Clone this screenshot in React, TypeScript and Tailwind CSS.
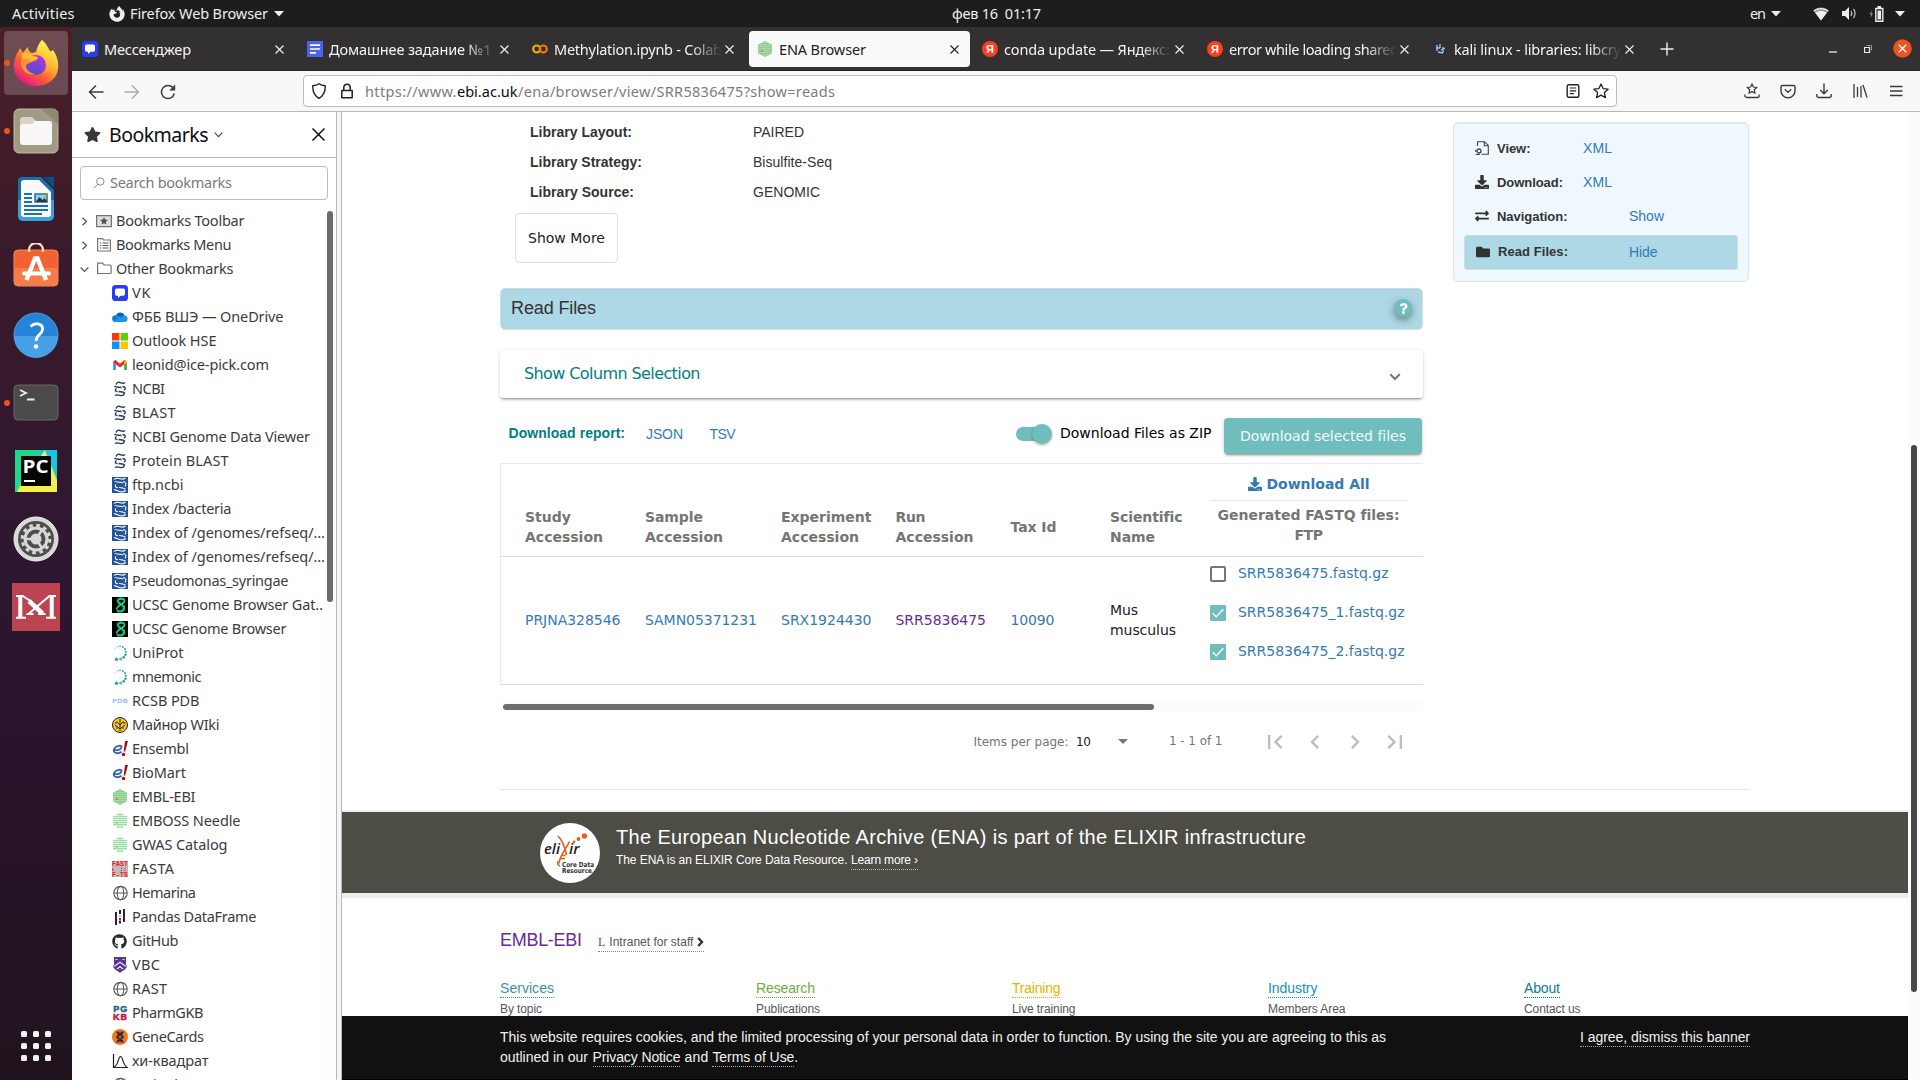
import React, { useLayoutEffect, useRef, useState } from "react";
import { FaFirefoxBrowser, FaDownload, FaExchangeAlt, FaFolder, FaQuestion, FaGithub, FaStar } from "react-icons/fa";
import { MdFirstPage, MdChevronLeft, MdChevronRight, MdLastPage } from "react-icons/md";

/* Text run whose tracking is adjusted so that it takes up w pixels. */
function Fit({ w, className = "", children }: { w: number; className?: string; children: string }) {
  const ref = useRef<HTMLSpanElement>(null);
  const [ls, setLs] = useState(0);
  useLayoutEffect(() => {
    const el = ref.current;
    if (!el) return;
    const natural = el.getBoundingClientRect().width;
    setLs((w - natural) / Math.max(1, children.length - 1));
  }, []);
  return (
    <span ref={ref} className={"inline-block justify-self-start whitespace-pre " + className} style={{ letterSpacing: ls + "px" }}>
      {children}
    </span>
  );
}

const Svg = ({ s = 16, vb = "0 0 16 16", className = "", children }: any) => (
  <svg width={s} height={s} viewBox={vb} className={"shrink-0 " + className} fill="none">
    {children}
  </svg>
);

/* ---------- favicons ---------- */
const Vk = () => (
  <Svg><rect width="16" height="16" rx="3.6" fill="#2a3df5" /><path d="M4.6 3.500h6.800a1.600 1.600 0 0 1 1.600 1.600v4a1.600 1.600 0 0 1-1.600 1.600H8.600L6 12.900v-2.200H4.600A1.600 1.600 0 0 1 3 9.100v-4a1.600 1.600 0 0 1 1.600-1.600z" fill="#fff" /></Svg>
);
const OneDrive = () => (
  <Svg><path d="M4 6.500A4.600 4.600 0 0 1 12.500 6l-3 3.500z" fill="#0364b8" /><path d="M3.500 6.200 12 11.500 8 13H3.500a3.400 3.400 0 0 1 0-6.800z" fill="#0f78d4" /><path d="M12.300 6.300a3.500 3.500 0 0 1 1.200 6.700H3.500C2 13 1 12.200.7 11.500L9 8z" fill="#1b93e8" /></Svg>
);
const Ms = () => (
  <Svg><path d="M0 0h7.500v7.500H0z" fill="#fb3a0a" /><path d="M8.500 0H16v7.500H8.500z" fill="#5fcf0c" /><path d="M0 8.500h7.500V16H0z" fill="#0a95f5" /><path d="M8.500 8.500H16V16H8.500z" fill="#fdc500" /></Svg>
);
const Gmail = () => (
  <Svg><path d="M2.500 13V4.500" stroke="#4285f4" strokeWidth="2.600" /><path d="M13.500 13V4.500" stroke="#34a853" strokeWidth="2.600" /><path d="M2.200 4 8 8.600 13.800 4" stroke="#ea2a25" strokeWidth="3" /><path d="M12.200 3.500h2.600V6l-2.600 1.500z" fill="#fbbc04" /></Svg>
);
const Ncbi = () => (
  <Svg><path d="M4 3.500C5 .8 7 1 9 1.800s2.800.7 4-.3M2.500 5c1.500 1.800 4.500.8 7 1.500M10.500 5.500c3 .3 3.500 2 1.500 3.800M4.500 7.500C2.500 9 3 10.500 5.500 10.700M6.500 10.500c2.500 0 5 .3 6.500 1.800M3 14.500c1.500-1.200 3.500-.5 5.500 0s3.200-.2 3.800-2" stroke="#223b63" strokeWidth="1.400" /></Svg>
);
const NcbiBlue = () => (
  <Svg><path d="M0 0h16v16H0z" fill="#24539a" /><path d="M2 2.500C4 1 6.500 1 8.500 1.800s3.500.2 5-.8M3 4c1.500 1.800 5 .8 8 2M11 4.500c3 .5 3.500 3 2 5M4 7.500C2.500 9.500 4 10.700 6 10.800M7 10.500c2.500 0 4.500.3 6.500 1.800M2 13c2-.8 4.500 2 7 2s3.500-.5 5-1.500" stroke="#fff" strokeWidth="1.150" /></Svg>
);
const Ucsc = () => (
  <Svg><path d="M0 0h16v16H0z" fill="#000" /><path d="M11.500 2C7 .8 4.500 3 6.500 5.500s6 2.500 5.500 6-5 3.500-7 2" stroke="#10c46a" strokeWidth="2.200" /><path d="M8 1.500c5.500 0 5.500 3 2.500 5s-6.500 3.500-5.500 6" stroke="#1fc79a" strokeWidth="1.700" /></Svg>
);
const Uniprot = () => (
  <Svg>{[[8, 1.200, 0.9], [10.800, 2, 1], [12.900, 4, 1.100], [13.800, 6.700, 1.200], [13.500, 9.700, 1.300], [11.700, 12.300, 1.400], [8.700, 14, 1.500], [4.500, 14.200, 1.700], [5.200, 1.800, 0.6], [3, 3.200, 0.5]].map(([x, y, r], i) => <circle key={i} cx={x} cy={y} r={r} fill={i % 3 ? "#3e9fae" : "#4cb8c4"} />)}</Svg>
);
const Pdb = () => <Svg><text x="0" y="10" fontSize="6" fontWeight="bold" fill="#9cc3f0" fontFamily="DejaVu Sans" textLength="16" lengthAdjust="spacingAndGlyphs">PDB</text></Svg>;
const Minor = () => (
  <Svg><circle cx="8" cy="8" r="7.500" fill="#f5c22f" stroke="#222" /><path d="M8 2v12M8 12 3 8M8 12l5-4M8 8 4.500 4.500M8 8l3.500-3.500M3 6h2M11 6h2.500M5 12v-2M11 12v-2" stroke="#222" strokeWidth=".9" /></Svg>
);
const Ensembl = () => (
  <Svg><path d="M2.500 9c3.500.5 7-.8 7-2.800 0-2.400-5.500-1.900-7.500 1.900-1.500 4 4 5.400 7.500 2.700" stroke="#3765b0" strokeWidth="1.900" /><path d="M13 0h3l-2.800 10.500h-1.500z" fill="#a90f16" /><circle cx="11.600" cy="13.500" r="1.700" fill="#c00" /></Svg>
);
const Hex = ({ light = false }: { light?: boolean }) => (
  <Svg>
    <path d="M8 0l7 3.700v8.600L8 16l-7-3.700V3.700z" fill={light ? "#d3f4d9" : "#90cd92"} />
    {[1.500, 3.500, 5.500, 7.500, 9.500, 11.500, 14].map((y) => <path key={y} d={y < 2 || y > 13 ? `M5.500 ${y}h5.500` : `M1.500 ${y}h13`} stroke={light ? "#63c878" : "#bfe8be"} strokeWidth="1" strokeDasharray="1 1" />)}
    <circle cx="4.800" cy="10" r="1" fill={light ? "#ef9a9a" : "#e95c50"} />
  </Svg>
);
const Fasta = () => (
  <Svg><path d="M0 0h16v16H0z" fill="#bdbdbd" /><g fontSize="6.500" fontWeight="bold" fill="#f11" fontFamily="Liberation Mono"><text x="0" y="5.200" textLength="16">FAST</text><text x="0" y="15.500" textLength="16">F-TS</text></g><path d="M.8 7v3M9.500 7v1M9.500 9v1M13 7v1M13 9v1" stroke="#f11" /></Svg>
);
const Globe = () => (
  <Svg className="translate-x-[0.5px]"><g stroke="#5c5c5c" strokeWidth="1.150"><circle cx="8" cy="8" r="6.700" /><ellipse cx="8" cy="8" rx="3.200" ry="6.700" /><path d="M1.300 8h13.400" /></g></Svg>
);
const Pandas = () => (
  <Svg><path d="M4 3v13M12 0v13" stroke="#150458" strokeWidth="1.800" /><path d="M8 1v4M8 11.500v3" stroke="#150458" strokeWidth="1.800" /><path d="M7 6h2v2H7z" fill="#ffca00" /><path d="M7 9h2v2H7z" fill="#e70488" /></Svg>
);
const Vbc = () => (
  <Svg><path d="M2 0h12v8l1 1c0 3-5 5-7 7-2-2-7-4-7-7l1-1z" fill="#5a3794" /><path d="M2 9.500l6-4.300 6 4.300M3.500 2.500h2M10.500 2.500h2M5 12l3-2.200L11 12" stroke="#e7def5" strokeWidth="1.200" /></Svg>
);
const Pgkb = () => (
  <Svg><g fontFamily="Liberation Sans" fontWeight="bold" fontSize="9" strokeWidth=".5"><text x="1.200" y="7" fill="#286090" stroke="#286090" textLength="14">PG</text><text x="1" y="15.300" fill="#cc1144" stroke="#cc1144" textLength="14">KB</text></g></Svg>
);
const GeneCards = () => (
  <Svg><circle cx="8" cy="8" r="8" fill="#f27a16" /><path d="M5 2.500c0 3 6 3 6 5.500s-6 2.500-6 5.500M11 2.500c0 3-6 3-6 5.500s6 2.500 6 5.500" stroke="#2b2350" strokeWidth="1.600" /><path d="M6 3.200h4M5.500 8h5M6 12.800h4" stroke="#2b2350" strokeWidth=".8" /></Svg>
);
const Chi = () => (
  <Svg><path d="M1.500 1v13.500H16" stroke="#222" strokeWidth="1.200" /><path d="M2 14c4.500-1 4-10.500 6.500-10.500S11 12.500 15 14" stroke="#222" strokeWidth="1.200" /></Svg>
);
const Docs = () => (
  <Svg><path d="M0 0h16v16H0z" fill="#4a63f0" /><path d="M3 4.200h10M3 8h10M3 11.800h6" stroke="#fff" strokeWidth="1.700" /></Svg>
);
const Colab = () => (
  <Svg><circle cx="4.700" cy="8" r="3.500" stroke="#f9ab00" strokeWidth="2.200" /><circle cx="11.300" cy="8" r="3.500" stroke="#ef7d00" strokeWidth="2.200" /></Svg>
);
const Yandex = () => (
  <Svg><circle cx="8" cy="8" r="8" fill="#fc3f1d" /><text x="8" y="12" textAnchor="middle" fontSize="11" fontWeight="bold" fill="#fff" fontFamily="Liberation Sans">Я</text></Svg>
);
const Linux = () => (
  <Svg><g fontSize="10" fontWeight="bold" fill="#24304f" fontFamily="Liberation Serif"><text x="0" y="8.500">U</text><text x="8.500" y="15.500">L</text></g><path d="M5 4v6M4 7h4M8 3v4M11 6v6M9 9l4-2M6 11l5 1" stroke="#a9c4ec" strokeWidth="1.300" /></Svg>
);

/* ---------- desktop ---------- */
const Caret = () => <svg width="10" height="6" viewBox="0 0 10 6" className="shrink-0"><path d="M0 0h10L5 5.500z" fill="#eee" /></svg>;

const TopBar = () => (
  <div className="flex h-[27px] w-full shrink-0 items-center bg-[#1d1d1d] font-['Noto_Sans',sans-serif] text-[14.5px] leading-[27px] text-[#eeeeee]">
    <div className="flex w-[952px] items-center pl-3">
      <div className="w-[97px]"><Fit w={62.5}>Activities</Fit></div>
      <FaFirefoxBrowser size={16} />
      <div className="ml-[5px] w-[144px]"><Fit w={138}>Firefox Web Browser</Fit></div>
      <Caret />
    </div>
    <div className="w-[798px]"><Fit w={89}>фев 16  01:17</Fit></div>
    <div className="w-[21px]"><Fit w={16}>en</Fit></div>
    <Caret />
    <svg width="16" height="14" viewBox="0 0 16 14" className="ml-8"><path d="M.3 3.500C4.500-.5 11.500-.5 15.700 3.500L8 13.500z" fill="#999" /><path d="M.8 4C5 .8 11 .8 15.200 4" stroke="#eee" strokeWidth="1.200" fill="none" /><path d="M2.200 5.800c3.500-2.500 8.100-2.500 11.600 0L8 13.500z" fill="#eee" /></svg>
    <svg width="15" height="13" viewBox="0 0 15 13" className="ml-[13px]"><path d="M0 4h3l4-4v13L3 9H0z" fill="#eee" /><path d="M9 4c1 1.500 1 3.500 0 5M11.500 2c2 2.500 2 6.500 0 9" stroke="#bbb" strokeWidth="1.300" fill="none" /></svg>
    <svg width="15" height="16" viewBox="0 0 15 16" className="ml-[12px]"><path d="M3 4 .5 8.500h1.800L1.500 12 4 7.500H2.200z" fill="#999" /><path d="M6.800 2.500h7v12.700h-7z" stroke="#eee" strokeWidth="1.400" fill="none" /><path d="M8.500 4.500h3.600v9H8.500zM8.500 0h3.600v2H8.500z" fill="#eee" /></svg>
    <div className="ml-[11px]"><Caret /></div>
  </div>
);

const Firefox = () => (
  <svg width="46" height="48" viewBox="0 0 46 48">
    <defs>
      <linearGradient id="ff1" x1=".8" y1=".1" x2=".2" y2=".95"><stop offset="0" stopColor="#fff44f" /><stop offset=".35" stopColor="#ffb52e" /><stop offset=".65" stopColor="#ff5b36" /><stop offset="1" stopColor="#e31587" /></linearGradient>
      <linearGradient id="ff2" x1=".7" y1="0" x2=".3" y2="1"><stop offset="0" stopColor="#b833e1" /><stop offset="1" stopColor="#4b50c8" /></linearGradient>
      <linearGradient id="ff3" x1="0" y1="0" x2="0" y2="1"><stop offset="0" stopColor="#fff44f" /><stop offset="1" stopColor="#ffa030" stopOpacity=".3" /></linearGradient>
    </defs>
    <path d="M29 1c5 4 6 8 8 12l3-2c4 6 6 12 5 19-1 10-11 17-22 17S2 40 1 29c-.5-7 2-13 4-16l2-4 3 5c1-2 3-4 5-6 0 3 1 5 4 6l4-1c1-5 3-9 6-12z" fill="url(#ff1)" />
    <circle cx="23" cy="26" r="10" fill="url(#ff2)" />
    <path d="M29 1c-6 7-4 12 1 16 5 4 6 12 0 18 8-3 12-10 10-18-2-7-8-9-11-16z" fill="url(#ff3)" />
    <path d="M10 14c5-1 8 1 9 3l6 1c0 3-3 4-6 5-3 2-6 1-6 4 0 4 4 7 9 8-8 2-14-4-14-11 0-4 1-7 2-10z" fill="#ff9430" />
    <path d="M10 14c5-1 8 1 9 3l6 1c-1 3-4 3-7 4-3-3-6-3-9-2z" fill="#ffbd3a" />
  </svg>
);
const Files = () => (
  <svg width="46" height="46" viewBox="0 0 46 46"><rect x="1" y="1" width="44" height="44" rx="5" fill="#a19a85" stroke="#bdb8a6" /><path d="M28 1h12a5 5 0 0 1 5 5v10z" fill="#8f8872" /><path d="M7 12a3 3 0 0 1 3-3h9l4 4h13a3 3 0 0 1 3 3v5H7z" fill="#d9d4c4" /><path d="M7 19a3 3 0 0 1 3-3h9l3-3h14a3 3 0 0 1 3 3v18a3 3 0 0 1-3 3H10a3 3 0 0 1-3-3z" fill="#f8f7f5" /></svg>
);
const Writer = () => (
  <svg width="38" height="46" viewBox="0 0 38 46"><path d="M5 1h19l13 13v26a5 5 0 0 1-5 5H6a5 5 0 0 1-5-5V5a4 4 0 0 1 4-4z" fill="#1a6faa" /><path d="M1 24h36v16a5 5 0 0 1-5 5H6a5 5 0 0 1-5-5z" fill="#3fa0d8" /><path d="M26 1h11v11z" fill="#0a4f7e" /><path d="M7 4h15l12 12v22a3 3 0 0 1-3 3H7a3 3 0 0 1-3-3V7a3 3 0 0 1 3-3z" fill="#fafafa" /><path d="M7 18h8M7 22h8M7 26h8M7 30h24M7 34h24M7 38h18" stroke="#1d72ad" strokeWidth="2" /><path d="M18 18h12v8H18z" fill="#8fd0f0" stroke="#1d72ad" strokeWidth="1.500" /><path d="M18.500 26l4-5 3 3 2-2 3 4z" fill="#333" /><circle cx="28" cy="20" r="1.500" fill="#f7b500" /></svg>
);
const Store = () => (
  <svg width="46" height="44" viewBox="0 0 46 44" className="translate-y-[-2px]"><rect x="1" y="7" width="44" height="36" rx="4" fill="#f06330" stroke="#f58a60" /><path d="M1.500 25h43v14a4 4 0 0 1-4 4h-35a4 4 0 0 1-4-4z" fill="#f47c4c" /><path d="M16 9V7a7 7 0 0 1 14 0v2" stroke="#fbe1ba" strokeWidth="2.300" fill="none" /><path d="M13.500 37 22 15.500h2.500L33 37" stroke="#fff" strokeWidth="4.400" fill="none" /><path d="M11 30.500h25" stroke="#fff" strokeWidth="3.800" strokeLinecap="round" /></svg>
);
const Help = () => (
  <svg width="46" height="46" viewBox="0 0 46 46"><circle cx="23" cy="23" r="22" fill="#2583d8" stroke="#4a9fe5" /><path d="M1 24h44a22 22 0 0 1-44 0z" fill="#47a0e5" /><path d="M17.500 14.500C23 9.500 30.500 12 29.500 18c-.8 4.500-6.500 5-6.500 11" stroke="#fff" strokeWidth="2.800" fill="none" /><circle cx="23" cy="34.500" r="2.300" fill="#fff" /></svg>
);
const Terminal = () => (
  <svg width="46" height="38" viewBox="0 0 46 38"><rect x="1" y="1" width="44" height="35" rx="4" fill="#4a4a49" stroke="#686866" /><path d="M7 6l6 3-6 3M14 15.500h7.500" stroke="#eee" strokeWidth="1.800" fill="none" /></svg>
);
const PyCharm = () => (
  <svg width="42" height="42" viewBox="0 0 42 42"><path d="M0 0h42v42H0z" fill="#21d789" /><path d="M22 0h20v30z" fill="#13c9d8" /><path d="M30 0l12 30v12H2l4-8z" fill="#f2f04a" /><path d="M30 0h12v26z" fill="#14c8e4" /><path d="M6 6h30v30H6z" fill="#050505" /><text x="7.500" y="22.500" fontSize="18.500" fontWeight="bold" fill="#fff" fontFamily="Open Sans, sans-serif" textLength="26" lengthAdjust="spacingAndGlyphs">PC</text><path d="M9 31h11" stroke="#fff" strokeWidth="2" /></svg>
);
const Settings = () => (
  <svg width="46" height="46" viewBox="0 0 46 46"><circle cx="23" cy="23" r="22" fill="#d9d9d7" stroke="#eee" /><circle cx="23" cy="23" r="18" fill="#4e4e4d" /><circle cx="23" cy="23" r="13.800" stroke="#d9d9d7" strokeWidth="3" strokeDasharray="3.600 3.620" fill="none" /><circle cx="23" cy="23" r="11" stroke="#d9d9d7" strokeWidth="3" fill="none" /><circle cx="23" cy="23" r="5.500" fill="#d9d9d7" /><path d="M23 23 29 32M23 23H11.500M23 23l6-9" stroke="#d9d9d7" strokeWidth="2.500" /></svg>
);
const MApp = () => (
  <svg width="48" height="48" viewBox="0 0 48 48"><path d="M0 0h48v48H0z" fill="#bb4450" /><path d="M4 13h7M37 13h7M4 34.800h10M34 34.800h10" stroke="#fff" strokeWidth="2" /><path d="M8.300 13v22M39.700 13v22" stroke="#fff" strokeWidth="4" /><path d="M10 12.500 20 19M38 12.500 17 30.500" stroke="#fff" strokeWidth="2" /><path d="M17 18l13.500 12.500" stroke="#fff" strokeWidth="4.500" /><path d="M14.500 31h7M26 31h7.500" stroke="#fff" strokeWidth="1.800" /></svg>
);

const dock = [
  { icon: <Firefox />, dot: true, active: true },
  { icon: <Files />, dot: true },
  { icon: <Writer /> },
  { icon: <Store /> },
  { icon: <Help /> },
  { icon: <Terminal />, dot: true },
  { icon: <PyCharm /> },
  { icon: <Settings /> },
  { icon: <MApp /> },
];

const Dock = () => (
  <div className="flex h-full w-[72px] shrink-0 flex-col items-center bg-[linear-gradient(180deg,#4a2027_0%,#3b1a2a_20%,#2e1730_50%,#29152b_70%,#20131d_100%)] pt-[2px]">
    {dock.map((d, i) => (
      <div key={i} className="relative flex h-[68px] w-full items-center justify-center">
        <div className={"flex h-16 w-16 items-center justify-center rounded-[4px] " + (d.active ? "bg-white/20" : "")}>{d.icon}</div>
        {d.dot && <span className="absolute left-[4px] top-[31px] h-[6px] w-[6px] rounded-full bg-[#e95420]" />}
      </div>
    ))}
    <div className="mt-auto mb-[19px] grid grid-cols-3 gap-[6px]">
      {Array.from({ length: 9 }, (_, i) => <span key={i} className="h-[6px] w-[6px] rounded-[1.500px] bg-[#f2f2f2]" />)}
    </div>
  </div>
);

/* ---------- browser chrome ---------- */
const tabs = [
  { icon: <Vk />, t: "Мессенджер", w: 87 },
  { icon: <Docs />, t: "Домашнее задание №1 ·", w: 170, fade: true },
  { icon: <Colab />, t: "Methylation.ipynb - Colab", w: 168, fade: true },
  { icon: <Hex />, t: "ENA Browser", w: 87, active: true },
  { icon: <Yandex />, t: "conda update — Яндекс:", w: 166, fade: true },
  { icon: <Yandex />, t: "error while loading shared", w: 170, fade: true },
  { icon: <Linux />, t: "kali linux - libraries: libcry", w: 167, fade: true },
];

const TabBar = () => (
  <div className="flex h-[44px] shrink-0 items-center border-b border-[#252424] bg-[#323031] font-['Noto_Sans',sans-serif] text-[14.5px] text-[#f4f4f4]">
    {tabs.map((t, i) => (
      <div key={i} className="h-full w-[225px] shrink-0 px-[2px] pt-1 pb-[3px]">
        <div className={"flex h-[36px] items-center rounded-[4px] pl-2 " + (t.active ? "bg-[#f9f9fa] text-[#222]" : "")}>
          {t.icon}
          <div className={"ml-[6px] w-[171px] pt-px " + (t.fade ? "[mask-image:linear-gradient(90deg,#000_80%,transparent_98%)]" : "")}><Fit w={t.w}>{t.t}</Fit></div>
          <svg width="9" height="9" viewBox="0 0 9 9" className="shrink-0 -ml-[0.5px]"><path d="M.5.500l8 8M8.500.500l-8 8" stroke="currentColor" strokeWidth="1.100" /></svg>
        </div>
      </div>
    ))}
    <svg width="14" height="14" viewBox="0 0 14 14" className="ml-[13px]"><path d="M7 .5v13M.5 7h13" stroke="#eee" strokeWidth="1.400" /></svg>
    <div className="ml-auto flex items-center pr-[8px]">
      <svg width="8" height="12" viewBox="0 0 8 12" className="mr-[27px]"><path d="M0 9h8" stroke="#eee" strokeWidth="1.300" /></svg>
      <svg width="8" height="8" viewBox="0 0 8 8" className="mr-[21px]"><path d="M.5 2.500h5v5h-5z" stroke="#eee" strokeWidth="1.200" fill="none" /><path d="M2.500.5h5v5" stroke="#999" fill="none" /></svg>
      <svg width="19" height="19" viewBox="0 0 19 19"><circle cx="9.500" cy="9.500" r="9.300" fill="#e95420" /><path d="M5.800 5.800l7.400 7.400M13.200 5.800l-7.400 7.400" stroke="#fff" strokeWidth="1.300" /></svg>
    </div>
  </div>
);

const NavBar = () => (
  <div className="flex h-[41px] shrink-0 items-center border-b border-[#b9b9ba] bg-[#f8f8f8] pl-4 font-['Noto_Sans',sans-serif] text-[14.5px] text-[#3a3a3c]">
    <Svg className="mr-5 mt-px"><path d="M8 1.500 1.500 8 8 14.500M1.500 8H15.500" stroke="#3a3a3c" strokeWidth="1.500" /></Svg>
    <Svg className="mr-5 mt-px"><path d="M8 1.500 14.500 8 8 14.500M14.500 8H.5" stroke="#ababac" strokeWidth="1.500" /></Svg>
    <Svg className="mt-px"><path d="M14.300 9.500A6.500 6.500 0 1 1 12.800 3.600" stroke="#3a3a3c" strokeWidth="1.500" /><path d="M15.200 .5v6H9.200z" fill="#3a3a3c" /></Svg>
    <div className="ml-[127px] flex h-[32px] w-[1314px] items-center rounded-[4px] border border-[#bcbcbd] bg-white pl-[7px]">
      <Svg><path d="M8 .8C10 2.200 12 2.600 14.200 2.800 14.500 8 13 12.500 8 15.300 3 12.500 1.500 8 1.800 2.800 4 2.600 6 2.200 8 .8z" stroke="#222" strokeWidth="1.400" /></Svg>
      <Svg className="ml-3"><path d="M2.800 7.500h10.400v7.300H2.800zM4.800 7.500V4.400a3.200 3.200 0 0 1 6.400 0v3.100" stroke="#222" strokeWidth="1.500" strokeLinejoin="round" /></Svg>
      <div className="ml-[10px] mt-[2px] flex w-[1201px] text-[#7c7c7e]">
        <div className="w-[92px]"><Fit w={91.5}>https://www.</Fit></div>
        <div className="w-[61px] text-[#0c0c0d]"><Fit w={60.500}>ebi.ac.uk</Fit></div>
        <Fit w={317}>/ena/browser/view/SRR5836475?show=reads</Fit>
      </div>
      <Svg s={14} vb="0 0 14 14"><rect x="1.200" y=".8" width="11.600" height="12.400" rx="1.500" stroke="#222" strokeWidth="1.400" /><path d="M3.800 4h6.400M3.800 6.800h6.400M3.800 9.600h4" stroke="#222" strokeWidth="1.200" /></Svg>
      <Svg className="ml-[13px]"><path d="M8 1l2.100 4.600 5 .6-3.700 3.400 1 5L8 12.100l-4.400 2.500 1-5L.9 6.200l5-.6z" stroke="#222" strokeWidth="1.300" strokeLinejoin="round" /></Svg>
    </div>
    <div className="ml-auto flex items-center gap-5 pr-[16px]">
      <Svg><path d="M8 1l1.400 3 3.300.4-2.400 2.300.6 3.300L8 8.400 5.100 10l.6-3.300-2.400-2.300L6.600 4z" stroke="#3a3a3c" strokeWidth="1.200" /><path d="M.8 11.500v1a2 2 0 0 0 2 2h10.400a2 2 0 0 0 2-2v-1" stroke="#3a3a3c" strokeWidth="1.300" /></Svg>
      <Svg><path d="M2.300 2.500h11.400a1.300 1.300 0 0 1 1.300 1.300v4a7 7 0 0 1-14 0v-4a1.300 1.300 0 0 1 1.300-1.300zM4.800 6.300 8 9.400l3.200-3.100" stroke="#3a3a3c" strokeWidth="1.400" /></Svg>
      <Svg><path d="M8 .5v10M4.200 7 8 10.800 11.800 7M.8 11v1.500a2 2 0 0 0 2 2h10.400a2 2 0 0 0 2-2V11" stroke="#3a3a3c" strokeWidth="1.400" /></Svg>
      <Svg><path d="M2 1v14M5.500 4v10M9 3v11.500M11 2l4 12.500" stroke="#3a3a3c" strokeWidth="1.300" /></Svg>
      <Svg><path d="M2 3.500h12.500M2 8h12.500M2 12.500h12.500" stroke="#3a3a3c" strokeWidth="1.400" /></Svg>
    </div>
  </div>
);

/* ---------- bookmarks sidebar ---------- */
const bookmarks: [React.ReactNode, string, number][] = [
  [<Vk />, "VK", 18.500], [<OneDrive />, "ФББ ВШЭ — OneDrive", 151.500], [<Ms />, "Outlook HSE", 84.500], [<Gmail />, "leonid@ice-pick.com", 137],
  [<Ncbi />, "NCBI", 33], [<Ncbi />, "BLAST", 43.500], [<Ncbi />, "NCBI Genome Data Viewer", 178], [<Ncbi />, "Protein BLAST", 96.500],
  [<NcbiBlue />, "ftp.ncbi", 51.500], [<NcbiBlue />, "Index /bacteria", 99.500], [<NcbiBlue />, "Index of /genomes/refseq/…", 193], [<NcbiBlue />, "Index of /genomes/refseq/…", 193],
  [<NcbiBlue />, "Pseudomonas_syringae", 156.500], [<Ucsc />, "UCSC Genome Browser Gat‥", 191], [<Ucsc />, "UCSC Genome Browser", 154.500],
  [<Uniprot />, "UniProt", 51.500], [<Uniprot />, "mnemonic", 69.500], [<Pdb />, "RCSB PDB", 67.500], [<Minor />, "Майнор WIki", 87.500], [<Ensembl />, "Ensembl", 57], [<Ensembl />, "BioMart", 54],
  [<Hex />, "EMBL-EBI", 63.500], [<Hex light />, "EMBOSS Needle", 108.500], [<Hex light />, "GWAS Catalog", 95.500], [<Fasta />, "FASTA", 42], [<Globe />, "Hemarina", 64],
  [<Pandas />, "Pandas DataFrame", 124.500], [<FaGithub size={15} color="#24292f" className="mr-px shrink-0" />, "GitHub", 46.500], [<Vbc />, "VBC", 28], [<Globe />, "RAST", 35], [<Pgkb />, "PharmGKB", 71.500],
  [<GeneCards />, "GeneCards", 72], [<Chi />, "хи-квадрат", 76.500], [<Globe />, "articol", 46],
];

const Twisty = ({ open = false }: { open?: boolean }) => (
  <svg width="9" height="9" viewBox="0 0 9 9" className="mr-[7px] shrink-0"><path d={open ? "M.7 2.500 4.500 6.500 8.300 2.500" : "M2.500.7 6.500 4.500 2.500 8.300"} stroke="#555" strokeWidth="1.200" fill="none" /></svg>
);

const Sidebar = () => (
  <div className="flex h-full w-[265px] shrink-0 flex-col overflow-hidden border-r border-[#b9b9ba] bg-white font-['Noto_Sans',sans-serif] text-[14.5px] text-[#3b3b3d]">
    <div className="flex h-[46px] shrink-0 items-center border-b border-[#b9b9ba] pl-[12px]">
      <FaStar size={17} color="#38383a" />
      <div className="ml-[8px] w-[105px] text-[19.5px] text-[#0c0c0d]"><Fit w={99.500}>Bookmarks</Fit></div>
      <svg width="9" height="6" viewBox="0 0 9 6"><path d="M.7.7 4.500 4.700 8.300.7" stroke="#444" strokeWidth="1.100" fill="none" /></svg>
      <svg width="13" height="13" viewBox="0 0 13 13" className="ml-auto mr-[11.500px]"><path d="M.5.500l12 12M12.500.500l-12 12" stroke="#111" strokeWidth="1.500" /></svg>
    </div>
    <div className="ml-2 mt-2 flex h-[34px] w-[248px] shrink-0 items-center rounded-[4px] border border-[#bcbcbd] pl-3 text-[#7a7a7c]">
      <svg width="12" height="12" viewBox="0 0 12 12" className="mr-[5px]"><circle cx="7.300" cy="4.500" r="3.700" stroke="#8a8a8a" fill="none" /><path d="M4.600 7.300.7 11.300" stroke="#8a8a8a" /></svg>
      <Fit w={122}>Search bookmarks</Fit>
    </div>
    <div className="mt-[9px] flex min-h-0 flex-1">
      <div className="min-w-0 flex-1 overflow-hidden">
        <div className="flex h-6 items-center pl-2"><Twisty /><Svg><path d="M.6 2.600h14.800v11H.6z" stroke="#737373" strokeWidth="1.200" fill="#dedee0" /><path d="M8 4l1.200 2.600 2.800.3-2.100 1.900.6 2.800L8 10.200l-2.500 1.400.6-2.800L4 6.900l2.800-.3z" fill="#555" /></Svg><div className="ml-1"><Fit w={128.500}>Bookmarks Toolbar</Fit></div></div>
        <div className="flex h-6 items-center pl-2"><Twisty /><Svg><path d="M1.600 1.600h5l1 1.400h6.800v11H1.600z" stroke="#737373" strokeWidth="1.200" /><path d="M4 6h1.300M6.500 6h6M4 8.500h1.300M6.500 8.500h6M4 11h1.300M6.500 11h6" stroke="#555" strokeWidth="1.100" /></Svg><div className="ml-1"><Fit w={115.500}>Bookmarks Menu</Fit></div></div>
        <div className="flex h-6 items-center pl-2"><Twisty open /><Svg><path d="M1.600 12.500V2.200h5l1.500 1.800h6c.6 0 1 .4 1 1v6.500c0 .6-.4 1-1 1z" stroke="#737373" strokeWidth="1.200" /></Svg><div className="ml-1"><Fit w={117.500}>Other Bookmarks</Fit></div></div>
        {bookmarks.map(([icon, t, w], i) => (
          <div key={i} className="flex h-6 items-center pl-10"><div className="flex w-5 shrink-0">{icon}</div><Fit w={w}>{t}</Fit></div>
        ))}
      </div>
      <div className="w-[12px] shrink-0 bg-[#fdfdfd] pl-[3px] pt-[2px]"><div className="h-[391px] w-[6px] rounded-full bg-[#6b6b6c]" /></div>
    </div>
  </div>
);

/* ---------- page ---------- */
const dj = "font-['DejaVu_Sans',sans-serif] ";
const ls = "font-['Liberation_Sans',sans-serif] ";

const CheckBox = ({ on = false }: { on?: boolean }) =>
  on ? (
    <Svg><rect width="16" height="16" rx="1" fill="#70bdbd" /><path d="M2.800 8.300 6.300 11.800 13.300 4.300" stroke="#fff" strokeWidth="1.400" /></Svg>
  ) : (
    <span className="h-4 w-4 shrink-0 rounded-[2px] border-2 border-[#757575]" />
  );

const Th = ({ a, wa, b, wb }: { a: string; wa: number; b?: string; wb?: number }) => (
  <div className="flex flex-col items-start"><Fit w={wa}>{a}</Fit>{b && <Fit w={wb!}>{b}</Fit>}</div>
);

const InfoRow = ({ icon, label, w, value, vw, gap, hl = false }: any) => (
  <div className={"flex items-center " + (hl ? "mx-[10px] mt-[2px] h-[35px] rounded-[3px] border border-[#d4dadd] bg-[#add8e6] pb-[2px] pl-[11px]" : "h-[34px] pl-[21px]")}>
    <div className="w-[22px]">{icon}</div>
    <div className={gap}><Fit w={w} className="text-[13px] font-bold text-[#333]">{label}</Fit></div>
    <Fit w={vw} className="pt-px text-[14px] text-[#337ab7]">{value}</Fit>
  </div>
);

const ViewIcon = () => (
  <Svg s={14} vb="0 0 14 14"><path d="M2.500 5V.7h7L13.300 4.400v8.900H6.500M9.300.7v4h4" stroke="#444" strokeWidth="1.100" /><circle cx="4" cy="10" r="2" stroke="#444" strokeWidth="1.300" /><path d="M.8 9v2M.8 13.300h4" stroke="#444" strokeWidth="1.200" /></Svg>
);

const Elixir = () => (
  <svg width="60" height="60" viewBox="0 0 60 60" className="shrink-0">
    <circle cx="30" cy="30" r="30" fill="#fff" />
    <g fontSize="15" fontStyle="italic" fill="#222" fontFamily="Open Sans, sans-serif" fontWeight="600">
      <text x="4" y="31" textLength="16" lengthAdjust="spacingAndGlyphs">eli</text>
      <text x="29" y="31" textLength="10.500" lengthAdjust="spacingAndGlyphs">ir</text>
    </g>
    <path d="M18 13c6 6 7 13 8.500 19M29.500 18.500c-3 7-10 14-10.500 22" stroke="#e8601c" strokeWidth="1.700" fill="none" />
    <path d="M18 38c-.8 2 0 4 2 5M20 35.500h5M21 32.500h4.500" stroke="#e8601c" strokeWidth="1.500" fill="none" />
    <circle cx="34" cy="19" r="1.400" fill="#e8601c" /><circle cx="38.500" cy="16" r="1.900" fill="#e8601c" /><circle cx="44.500" cy="13" r="2.700" fill="#e8601c" />
    <g fontSize="6.800" fontWeight="bold" fill="#333" fontFamily="DejaVu Sans">
      <text x="22" y="43.500" textLength="32" lengthAdjust="spacingAndGlyphs">Core Data</text>
      <text x="22" y="49.500" textLength="30" lengthAdjust="spacingAndGlyphs">Resource</text>
    </g>
  </svg>
);

const footerCols: [string, number, string, number, string][] = [
  ["Services", 54, "By topic", 42, "text-[#3b9499] border-[#3b9499]"],
  ["Research", 59, "Publications", 64, "text-[#6cae3f] border-[#6cae3f]"],
  ["Training", 48.500, "Live training", 63.500, "text-[#e5b300] border-[#e5b300]"],
  ["Industry", 49.500, "Members Area", 77.500, "text-[#1691c0] border-[#1691c0]"],
  ["About", 36, "Contact us", 56.500, "text-[#0b7f85] border-[#0b7f85]"],
];

const Page = () => (
  <div className={ls + "flex h-full w-[1566px] shrink-0 flex-col overflow-hidden bg-white text-[14px] text-[#333]"}>
    <div className="min-h-0 flex-1 overflow-hidden">
      <div className="flex h-[677px] pl-[158px]">
        <div className="w-[923px] pt-[5px]">
          {([["Library Layout:", 102, "PAIRED", 51], ["Library Strategy:", 112, "Bisulfite-Seq", 79], ["Library Source:", 104, "GENOMIC", 67]] as const).map(([a, wa, b, wb]) => (
            <div key={a} className="flex h-[30px] items-center pl-[30px]">
              <div className="w-[223px] font-bold"><Fit w={wa}>{a}</Fit></div><Fit w={wb}>{b}</Fit>
            </div>
          ))}
          <div className={dj + "ml-[15px] mt-[6px] flex h-[50px] w-[103px] items-center justify-center rounded-[4px] border border-[#dedede] text-[14px] text-[#222]"}><Fit w={77}>Show More</Fit></div>

          <div className="mt-[25px] flex h-[42px] items-center rounded-[5px] border border-[#d5dde0] bg-[#add8e6] pl-[10px] pb-[2px] text-[18px] shadow-[inset_0_1px_1px_rgba(0,0,0,0.05)]">
            <Fit w={85}>Read Files</Fit>
            <span className="ml-auto mr-[10px] flex h-[18px] w-[18px] items-center justify-center rounded-full bg-[#70bdbd] text-white shadow-[0_3px_5px_rgba(0,0,0,0.2),0_4px_9px_rgba(0,0,0,0.14),0_1px_14px_rgba(0,0,0,0.12)]"><FaQuestion size={11} /></span>
          </div>

          <div className={dj + "mt-[20px] flex h-[48px] items-center rounded-[4px] bg-white pl-6 text-[16px] text-[#008080] shadow-[0_3px_1px_-2px_rgba(0,0,0,0.2),0_2px_2px_rgba(0,0,0,0.14),0_1px_5px_rgba(0,0,0,0.12)]"}>
            <Fit w={176.500}>Show Column Selection</Fit>
            <svg width="12" height="8" viewBox="0 0 12 8" className="ml-auto mr-[22px] mt-[6px]"><path d="M1.200 1.200 6 6 10.800 1.200" stroke="#757575" strokeWidth="2" fill="none" /></svg>
          </div>

          <div className="mt-5 flex h-[36px] items-center pl-[8.500px]">
            <div className="mb-[4px] flex w-[507.500px] items-center text-[#337ab7]">
              <div className="mb-px w-[137.500px] font-bold text-[#008080]"><Fit w={116.500}>Download report:</Fit></div>
              <div className="w-[63.500px]"><Fit w={37}>JSON</Fit></div><Fit w={26}>TSV</Fit>
            </div>
            <div className="mb-1 flex h-[20px] w-[36px] items-center">
              <div className="flex h-[14px] w-[30px] items-center rounded-full bg-[#70bdbd] pl-4"><span className="h-5 w-5 shrink-0 rounded-full bg-[#70bdbd] shadow-[0_1px_3px_rgba(0,0,0,0.35)]" /></div>
            </div>
            <div className={dj + "mb-[5px] ml-2 w-[164px] text-black"}><Fit w={151.500}>Download Files as ZIP</Fit></div>
            <div className={dj + "flex h-[36px] w-[198px] items-center justify-center rounded-[4px] bg-[#70bdbd] text-[#f4fafa] shadow-[0_3px_1px_-2px_rgba(0,0,0,0.2),0_2px_2px_rgba(0,0,0,0.14),0_1px_5px_rgba(0,0,0,0.12)]"}><Fit w={166}>Download selected files</Fit></div>
          </div>

          <div className={dj + "mt-[9px] border-l border-t border-[#ebebeb] text-[14px] leading-5"}>
            <div className="grid h-[93px] grid-cols-[120px_136px_114.500px_115px_99.500px_100px_197px] border-b border-[#dedede] pl-6 font-bold text-[#757575]">
              <div className="pt-[43px]"><Th a="Study" wa={46} b="Accession" wb={78} /></div>
              <div className="pt-[43px]"><Th a="Sample" wa={58} b="Accession" wb={78} /></div>
              <div className="pt-[43px]"><Th a="Experiment" wa={90.500} b="Accession" wb={78} /></div>
              <div className="pt-[43px]"><Th a="Run" wa={30} b="Accession" wb={78} /></div>
              <div className="pt-[53px]"><Th a="Tax Id" wa={46} /></div>
              <div className="pt-[43px]"><Th a="Scientific" wa={72} b="Name" wb={45} /></div>
              <div>
                <div className="flex h-[37px] items-center justify-center border-b border-[#e6e6e6] pt-[3px] text-[#337ab7]"><FaDownload size={14} className="mr-[5px]" /><Fit w={103}>Download All</Fit></div>
                <div className="flex flex-col items-center pt-1"><Fit w={181.500}>Generated FASTQ files:</Fit><Fit w={28.500}>FTP</Fit></div>
              </div>
            </div>
            <div className="grid h-[128px] grid-cols-[120px_136px_114.500px_115px_99.500px_100px_197px] items-center border-b border-[#dedede] pb-[2px] pl-6 text-[#337ab7]">
              <Fit w={95.500}>PRJNA328546</Fit>
              <Fit w={112}>SAMN05371231</Fit>
              <Fit w={90.500}>SRX1924430</Fit>
              <Fit w={90.500} className="text-[#6a2a9c]">SRR5836475</Fit>
              <Fit w={44}>10090</Fit>
              <div className="flex flex-col items-start text-[#222]"><Fit w={28}>Mus</Fit><Fit w={66}>musculus</Fit></div>
              <div className="flex h-full flex-col">
                <div className="flex h-[34px] items-center gap-3"><CheckBox /><Fit w={150.500} className="pb-[2px]">SRR5836475.fastq.gz</Fit></div>
                <div className="flex h-[44px] items-center gap-3"><CheckBox on /><Fit w={166.500} className="pb-[2px]">SRR5836475_1.fastq.gz</Fit></div>
                <div className="flex h-[34px] items-center gap-3"><CheckBox on /><Fit w={166.500} className="pb-[2px]">SRR5836475_2.fastq.gz</Fit></div>
              </div>
            </div>
          </div>
          <div className="mt-4 h-[12px] bg-[#fcfcfc] pl-[3px] pt-[3px]"><div className="h-[6px] w-[651px] rounded-full bg-[#6d6d6d]" /></div>
          <div className={dj + "flex h-[56px] items-center pl-[473.500px] text-[12px] text-[#757575]"}>
            <div className="w-[102.500px] pt-px"><Fit w={95}>Items per page:</Fit></div>
            <div className="w-[42px] pt-px text-[#222]"><Fit w={15}>10</Fit></div>
            <svg width="10" height="5" viewBox="0 0 10 5"><path d="M0 0h10L5 5z" fill="#757575" /></svg>
            <div className="ml-[41px] w-[92px] pb-px"><Fit w={53.500}>1 - 1 of 1</Fit></div>
            <div className="mt-[1px] flex gap-3 text-[#bdbdbd]"><MdFirstPage size={28} /><MdChevronLeft size={28} /><MdChevronRight size={28} /><MdLastPage size={28} /></div>
          </div>
        </div>

        <div className="ml-[30px] mt-[10px] h-[160px] w-[296px] rounded-[5px] border border-[#dfe4e8] bg-[#eff7ff] pt-[8px] shadow-[inset_0_1px_1px_rgba(0,0,0,0.05)]">
          <InfoRow icon={<ViewIcon />} label="View:" w={33.500} value="XML" vw={29} gap="w-[86px]" />
          <InfoRow icon={<FaDownload size={14} color="#333" />} label="Download:" w={66} value="XML" vw={29} gap="w-[86px]" />
          <InfoRow icon={<FaExchangeAlt size={14} color="#333" />} label="Navigation:" w={70.500} value="Show" vw={35} gap="w-[132px]" />
          <InfoRow hl icon={<FaFolder size={14} color="#333" />} label="Read Files:" w={70} value="Hide" vw={28.500} gap="w-[131px]" />
        </div>
      </div>
      <div className="ml-[158px] h-px w-[1250px] bg-[#e6e6e6]" />

      <div className="mt-5 flex h-[88px] border-b-[5px] border-t-2 border-[#ededed] bg-[#4d4d46] pl-[198px] pt-[11px] text-white">
        <Elixir />
        <div className="ml-[16px] pt-px">
          <div className="text-[20px] leading-[26px]"><Fit w={690}>The European Nucleotide Archive (ENA) is part of the ELIXIR infrastructure</Fit></div>
          <div className="mt-px flex text-[12px] leading-[18px]"><div className="w-[235px]"><Fit w={231.500}>The ENA is an ELIXIR Core Data Resource.</Fit></div><div className="border-b border-dotted border-[#bbb]"><Fit w={67}>Learn more ›</Fit></div></div>
        </div>
      </div>

      <div className="flex h-[76px] items-center pl-[158px] pt-[8px]">
        <div className="w-[98px] text-[18px] text-[#6a2a9c]"><Fit w={82}>EMBL-EBI</Fit></div>
        <div className="mt-[5px] flex h-[18px] items-center border-b border-dotted border-[#888] text-[12px] text-[#555]">
          <span className="mr-[4px] font-['Liberation_Serif',serif] text-[12px]">L</span>
          <Fit w={84}>Intranet for staff</Fit>
          <svg width="7" height="10" viewBox="0 0 7 10" className="ml-[4px]"><path d="M1.200 1 5 5 1.200 9" stroke="#333" strokeWidth="2.400" fill="none" /></svg>
        </div>
      </div>
      <div className="flex pl-[158px] pt-[5px]">
        {footerCols.map(([h, hw, s, sw, c]) => (
          <div key={h} className="w-[256px]">
            <div className={"h-[19px] w-fit border-b border-dotted leading-[18px] " + c}><Fit w={hw}>{h}</Fit></div>
            <div className="pt-[3px] text-[12px] leading-[17px] text-[#54585a]"><Fit w={sw}>{s}</Fit></div>
          </div>
        ))}
      </div>
    </div>

    <div className="flex h-[64px] shrink-0 justify-between border-b border-black bg-[#111] pl-[158px] pr-[158px] pt-[11px] leading-5 text-[#f2f2f2]">
      <div>
        <Fit w={886}>This website requires cookies, and the limited processing of your personal data in order to function. By using the site you are agreeing to this as</Fit>
        <div className="flex">
          <div className="w-[92.500px]"><Fit w={88}>outlined in our</Fit></div>
          <div className="h-5 border-b border-dotted border-[#aaa]"><Fit w={88}>Privacy Notice</Fit></div>
          <div className="ml-[4px] w-[28px]"><Fit w={24}>and</Fit></div>
          <div className="h-5 border-b border-dotted border-[#aaa]"><Fit w={82}>Terms of Use</Fit></div>
          <span>.</span>
        </div>
      </div>
      <div className="h-5 border-b border-dotted border-[#aaa]"><Fit w={170}>I agree, dismiss this banner</Fit></div>
    </div>
  </div>
);

export default function App() {
  return (
    <div className="flex h-[1080px] w-[1920px] flex-col overflow-hidden">
      <TopBar />
      <div className="flex min-h-0 flex-1">
        <Dock />
        <div className="flex min-w-0 flex-1 flex-col">
          <TabBar />
          <NavBar />
          <div className="flex min-h-0 flex-1">
            <Sidebar />
            <div className="w-[5px] shrink-0 border-r border-[#b9b9ba] bg-[#f5f5f5]" />
            <Page />
            <div className="flex-1 bg-[#fcfcfc] pl-[3px] pt-[333px]"><div className="h-[547px] w-[6px] rounded-full bg-[#484848]" /></div>
          </div>
        </div>
      </div>
    </div>
  );
}
